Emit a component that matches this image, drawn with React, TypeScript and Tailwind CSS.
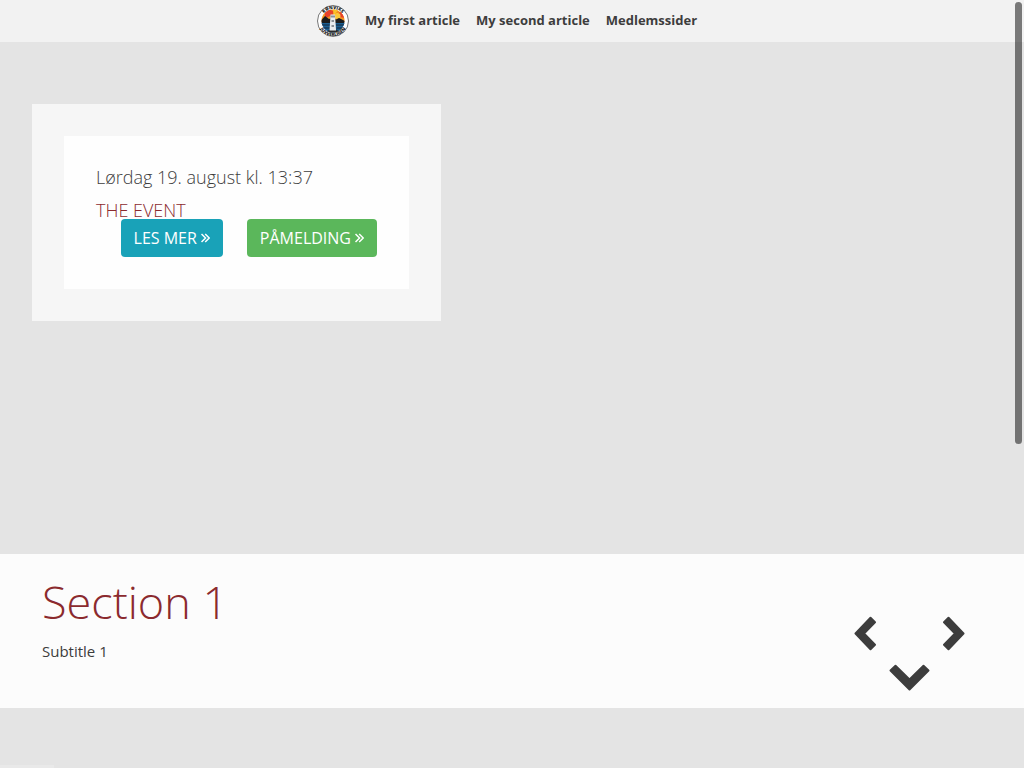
import React from "react";

const navItems = ["My first article", "My second article", "Medlemssider"];

function Logo() {
  return (
    <svg viewBox="0 0 64 64" className="size-8" role="img" aria-label="Home">
      <defs>
        <path id="ring-top" d="M8 32a24 24 0 0 1 48 0" />
        <path id="ring-bottom" d="M2 32a30 30 0 0 0 60 0" />
        <clipPath id="disc">
          <circle cx="32" cy="32" r="23" />
        </clipPath>
      </defs>
      <circle cx="32" cy="32" r="31" fill="#fff" stroke="#777" strokeWidth="2" />
      <g clipPath="url(#disc)">
        <path d="M8 8h48v26H8z" fill="#f5921f" />
        <path d="M32 12L16 5v22l16-8zM36 22L56 6v20z" fill="#e8422b" />
        <path d="M34 20L32 8h12z" fill="#f9c22b" />
        <circle cx="41" cy="22" r="6" fill="#fbc93a" />
        <path d="M8 31l8-9 8 6 6-2 8 3 6-3 12 6v8H8z" fill="#1c1c1c" />
        <path d="M8 36h48v20H8z" fill="#1b5f92" />
        <path d="M8 40h19M38 40h18M8 46h18M39 46h18" stroke="#173a58" strokeWidth="3" />
        <path d="M16 56l9-7h14l9 7z" fill="#2b2b2b" />
        <path d="M27 19h9l2 32H25z" fill="#e9edf0" />
        <path d="M27 21h9v4h-9zM29 30h5v4h-5zM29 40h5v4h-5z" fill="#8a9299" />
      </g>
      <g fill="#222" fontFamily="Open Sans, sans-serif" fontSize="9" fontWeight="800" textAnchor="middle">
        <text><textPath href="#ring-top" startOffset="50%">RØNVIKS</textPath></text>
        <text><textPath href="#ring-bottom" startOffset="50%">JUVVERLIGEN</textPath></text>
      </g>
    </svg>
  );
}

function Chevron({ className }: { className: string }) {
  return (
    <svg viewBox="0 0 22 35" className={className} fill="#3d3d3d" stroke="#3d3d3d" strokeWidth="2" strokeLinejoin="round" aria-hidden="true">
      <path d="M1.500 17.500L16.500 1.800L21 6.300L10 17.500L21 28.700L16.500 33.200z" />
    </svg>
  );
}

function DoubleAngle() {
  return (
    <svg viewBox="0 0 9 10" className="h-[10px] w-[9px]" fill="none" stroke="currentColor" strokeWidth="1.500" aria-hidden="true">
      <path d="M.5 1l4 4-4 4M4.200 1l4 4-4 4" />
    </svg>
  );
}

function Action({ label, color }: { label: string; color: string }) {
  return (
    <a href="#event" className={`flex h-[38px] items-center gap-1 rounded px-[13px] text-base text-white ${color}`}>
      <span>{label}</span>
      <DoubleAngle />
    </a>
  );
}

export default function App() {
  return (
    <div className="relative h-screen overflow-hidden bg-[#e4e4e4] font-['Open_Sans',sans-serif] text-[#3d3d3d]">
      <header className="bg-[#f2f2f2]">
        <nav className="flex h-[42px] items-center justify-center gap-4 pr-[10px] text-[13px] font-bold">
          <a href="#home"><Logo /></a>
          {navItems.map((item) => (
            <a key={item} href="#article">{item}</a>
          ))}
        </nav>
      </header>
      <main>
        <section className="min-h-[512px] px-8 pt-[62px]">
          <article className="w-[409px] max-w-full bg-[#f6f6f6] p-8">
            <div className="bg-[#fefefe] px-8 pt-[25px] pb-8">
              <p className="text-lg leading-[33px] font-light">Lørdag 19. august kl. 13:37</p>
              <h2 className="h-[25px] text-lg leading-[33px] font-light text-[#8b2a2e]">THE EVENT</h2>
              <div className="relative flex justify-end gap-6">
                <Action label="LES MER" color="bg-[#19a2b8]" />
                <Action label="PÅMELDING" color="bg-[#5bb75b]" />
              </div>
            </div>
          </article>
        </section>
        <section className="flex h-[154px] justify-between bg-[#fcfcfc] pr-[59px] pl-[42px]">
          <div className="pt-4">
            <h1 className="text-[45px] leading-[64px] font-light text-[#8b2a2e]">Section 1</h1>
            <p className="pt-[5px] text-[15px] leading-6">Subtitle 1</p>
          </div>
          <div className="grid w-[111px] grid-cols-2 content-start pt-[62px]">
            <button aria-label="Previous section" className="justify-self-start">
              <Chevron className="h-[35px] w-[22px]" />
            </button>
            <button aria-label="Next section" className="justify-self-end">
              <Chevron className="h-[35px] w-[22px] rotate-180" />
            </button>
            <button aria-label="Scroll down" className="col-span-2 mt-3 justify-self-center">
              <svg viewBox="0 0 41 28" className="h-7 w-[41px]" fill="#3d3d3d" stroke="#3d3d3d" strokeWidth="2" strokeLinejoin="round" aria-hidden="true">
                <path d="M1.500 7.500L6.500 2.800L20.500 16.500L34.500 2.800L39.500 7.500L20.500 26.500z" />
              </svg>
            </button>
          </div>
        </section>
        <section className="pt-[57px]">
          <div className="h-8 w-[54px] bg-[#e9e9e9]" />
        </section>
      </main>
      <div className="absolute top-[2px] right-[2px] h-[442px] w-[7px] rounded-full bg-black/50" />
    </div>
  );
}
